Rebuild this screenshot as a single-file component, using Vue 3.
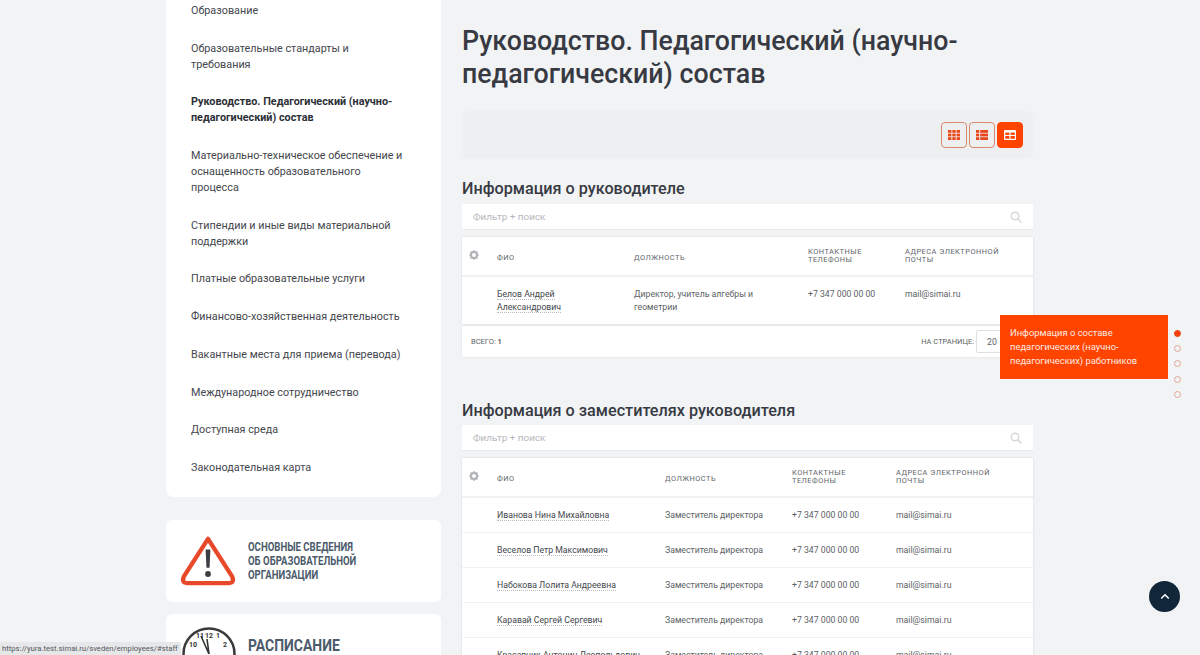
<template>
  <div class="viewport">
    <div class="page">
      <aside class="sidebar">
        <nav class="menu">
          <a
            v-for="item in menu"
            :key="item.title"
            class="menu-item"
            :class="{ active: item.active }"
          >{{ item.title }}</a>
        </nav>

        <div class="banner">
          <svg class="banner-icon" width="56" height="52" viewBox="0 0 58 54">
            <path
              d="M29 4 L54 43 Q57 50 50 50 L8 50 Q1 50 4 43 Z"
              fill="none"
              stroke="#e8492a"
              stroke-width="4.5"
              stroke-linejoin="round"
            />
            <path d="M26.5 15 H31.5 L30.6 34 H27.4 Z" fill="#3b3f44" />
            <circle cx="29" cy="40.5" r="3" fill="#3b3f44" />
          </svg>
          <div class="banner-text">ОСНОВНЫЕ СВЕДЕНИЯ<br />ОБ ОБРАЗОВАТЕЛЬНОЙ<br />ОРГАНИЗАЦИИ</div>
        </div>

        <div class="banner banner-clock">
          <svg class="clock" width="54" height="54" viewBox="0 0 54 54">
            <circle cx="27" cy="27" r="25.5" fill="#fff" stroke="#3a3a3a" stroke-width="2.5" />
            <text x="27" y="11" class="clock-num" text-anchor="middle">12</text>
            <text x="36" y="11" class="clock-num" text-anchor="middle">1</text>
            <text x="43" y="20" class="clock-num" text-anchor="middle">2</text>
            <text x="11" y="20" class="clock-num" text-anchor="middle">10</text>
            <text x="18" y="11" class="clock-num" text-anchor="middle">11</text>
            <path d="M27 27 L19 9 M27 27 L25 12" stroke="#333" stroke-width="1.6" />
          </svg>
          <div class="banner-title">РАСПИСАНИЕ</div>
        </div>
      </aside>

      <main class="content">
        <h1>Руководство. Педагогический (научно-педагогический) состав</h1>

        <div class="toolbar">
          <button class="view-btn">
            <svg width="12" height="12" viewBox="0 0 12 12" fill="#e8481c">
              <rect x="0" y="1" width="3.4" height="2.8" /><rect x="4.3" y="1" width="3.4" height="2.8" /><rect x="8.6" y="1" width="3.4" height="2.8" />
              <rect x="0" y="4.6" width="3.4" height="2.8" /><rect x="4.3" y="4.6" width="3.4" height="2.8" /><rect x="8.6" y="4.6" width="3.4" height="2.8" />
              <rect x="0" y="8.2" width="3.4" height="2.8" /><rect x="4.3" y="8.2" width="3.4" height="2.8" /><rect x="8.6" y="8.2" width="3.4" height="2.8" />
            </svg>
          </button>
          <button class="view-btn">
            <svg width="12" height="12" viewBox="0 0 12 12" fill="#e8481c">
              <rect x="0" y="1" width="3.2" height="2.8" /><rect x="4.2" y="1" width="7.8" height="2.8" />
              <rect x="0" y="4.6" width="3.2" height="2.8" /><rect x="4.2" y="4.6" width="7.8" height="2.8" />
              <rect x="0" y="8.2" width="3.2" height="2.8" /><rect x="4.2" y="8.2" width="7.8" height="2.8" />
            </svg>
          </button>
          <button class="view-btn on">
            <svg width="12" height="12" viewBox="0 0 12 12">
              <rect x="0" y="1" width="12" height="10" rx="1" fill="#fff" />
              <rect x="1.2" y="3.6" width="4.2" height="2.3" fill="#ff4400" /><rect x="6.6" y="3.6" width="4.2" height="2.3" fill="#ff4400" />
              <rect x="1.2" y="7" width="4.2" height="2.8" fill="#ff4400" /><rect x="6.6" y="7" width="4.2" height="2.8" fill="#ff4400" />
            </svg>
          </button>
        </div>

        <section class="block first">
          <h2>Информация о руководителе</h2>
          <div class="filter">
            <span>Фильтр + поиск</span>
            <svg width="12" height="12" viewBox="0 0 12 12" fill="none" stroke="#d4d6d9" stroke-width="1.4">
              <circle cx="5" cy="5" r="3.8" /><path d="M8 8 L11.4 11.4" />
            </svg>
          </div>
          <div class="grid-table cols-a">
            <div class="row head">
              <div class="gear-cell">
                <svg width="10" height="10" viewBox="0 0 10 10">
                  <circle cx="5" cy="5" r="3" fill="none" stroke="#aeb1b5" stroke-width="2" />
                  <path d="M5 0 V2 M5 8 V10 M0 5 H2 M8 5 H10 M1.5 1.5 L3 3 M7 7 L8.5 8.5 M1.5 8.5 L3 7 M7 3 L8.5 1.5" stroke="#aeb1b5" stroke-width="1.2" />
                </svg>
              </div>
              <div class="low">ФИО</div>
              <div class="low">Должность</div>
              <div class="wrap-tel">Контактные телефоны</div>
              <div class="wrap-mail">Адреса электронной почты</div>
            </div>
            <div class="row body tall">
              <div></div>
              <div><span class="name">Белов Андрей Александрович</span></div>
              <div>Директор, учитель алгебры и геометрии</div>
              <div>+7 347 000 00 00</div>
              <div>mail@simai.ru</div>
            </div>
          </div>
          <div class="table-foot">
            <div class="total">Всего: <b>1</b></div>
            <div class="per-page">
              <span>На странице:</span>
              <div class="select">20</div>
            </div>
          </div>
        </section>

        <section class="block second">
          <h2>Информация о заместителях руководителя</h2>
          <div class="filter">
            <span>Фильтр + поиск</span>
            <svg width="12" height="12" viewBox="0 0 12 12" fill="none" stroke="#d4d6d9" stroke-width="1.4">
              <circle cx="5" cy="5" r="3.8" /><path d="M8 8 L11.4 11.4" />
            </svg>
          </div>
          <div class="grid-table cols-b">
            <div class="row head">
              <div class="gear-cell">
                <svg width="10" height="10" viewBox="0 0 10 10">
                  <circle cx="5" cy="5" r="3" fill="none" stroke="#aeb1b5" stroke-width="2" />
                  <path d="M5 0 V2 M5 8 V10 M0 5 H2 M8 5 H10 M1.5 1.5 L3 3 M7 7 L8.5 8.5 M1.5 8.5 L3 7 M7 3 L8.5 1.5" stroke="#aeb1b5" stroke-width="1.2" />
                </svg>
              </div>
              <div class="low">ФИО</div>
              <div class="low">Должность</div>
              <div class="wrap-tel">Контактные телефоны</div>
              <div class="wrap-mail">Адреса электронной почты</div>
            </div>
            <div v-for="p in deputies" :key="p" class="row body">
              <div></div>
              <div><span class="name">{{ p }}</span></div>
              <div>Заместитель директора</div>
              <div>+7 347 000 00 00</div>
              <div>mail@simai.ru</div>
            </div>
          </div>
        </section>
      </main>
    </div>

    <div class="hint">Информация о составе педагогических (научно-педагогических) работников</div>
    <div class="dots">
      <span v-for="n in 5" :key="n" class="dot" :class="{ on: n === 1 }"></span>
    </div>
    <button class="to-top">
      <svg width="10" height="7" viewBox="0 0 12 8" fill="none" stroke="#fff" stroke-width="1.8">
        <path d="M1.5 6.5 L6 2 L10.5 6.5" />
      </svg>
    </button>
    <div class="status">https://yura.test.simai.ru/sveden/employees/#staff</div>
  </div>
</template>

<script setup>
const menu = [
  { title: "Образование" },
  { title: "Образовательные стандарты и требования" },
  { title: "Руководство. Педагогический (научно-педагогический) состав", active: true },
  { title: "Материально-техническое обеспечение и оснащенность образовательного процесса" },
  { title: "Стипендии и иные виды материальной поддержки" },
  { title: "Платные образовательные услуги" },
  { title: "Финансово-хозяйственная деятельность" },
  { title: "Вакантные места для приема (перевода)" },
  { title: "Международное сотрудничество" },
  { title: "Доступная среда" },
  { title: "Законодательная карта" },
];

const deputies = [
  "Иванова Нина Михайловна",
  "Веселов Петр Максимович",
  "Набокова Лолита Андреевна",
  "Каравай Сергей Сергевич",
  "Красавчик Антонин Леопольдович",
];
</script>

<style>
html,
body {
  margin: 0;
  overflow: hidden;
  background: #f2f3f5;
}
</style>

<style scoped>
.viewport {
  position: relative;
  width: 1200px;
  height: 655px;
  overflow: hidden;
  background: #f2f3f5;
  font-family: Roboto, "Open Sans", sans-serif;
  color: #3e4148;
}

.page {
  display: flex;
  gap: 21px;
  padding-left: 166px;
}

/* sidebar, scrolled past its top */
.sidebar {
  width: 275px;
  flex-shrink: 0;
}

.menu {
  display: flex;
  flex-direction: column;
  gap: 21.7px;
  height: 497px;
  box-sizing: border-box;
  padding: 3px 38px 0 25px;
  background: #fff;
  border-radius: 0 0 8px 8px;
}

.menu-item {
  font-size: 10.8px;
  line-height: 16px;
  color: #44474d;
}

.menu-item.active {
  font-weight: 700;
  color: #2d3037;
}

.banner {
  display: flex;
  align-items: center;
  height: 82px;
  margin-top: 23px;
  padding-left: 14px;
  box-sizing: border-box;
  background: #fff;
  border-radius: 6px;
}

.banner-icon {
  flex-shrink: 0;
}

.banner-text {
  margin-left: 12px;
  font-weight: 700;
  font-size: 12px;
  line-height: 14px;
  color: #4c5b6b;
  white-space: nowrap;
  transform: scaleX(0.8);
  transform-origin: left center;
}

.banner-clock {
  margin-top: 12px;
  align-items: flex-start;
  padding-top: 13px;
  padding-left: 16px;
}

.clock {
  flex-shrink: 0;
}

.clock-num {
  font-size: 7px;
  font-weight: 700;
  font-family: Roboto, sans-serif;
  fill: #333;
}

.banner-title {
  margin: 8px 0 0 12px;
  font-weight: 700;
  font-size: 17px;
  line-height: 20px;
  color: #4c5b6b;
  transform: scaleX(0.82);
  transform-origin: left center;
}

/* content */
.content {
  width: 571px;
  flex-shrink: 0;
  padding-top: 25px;
}

h1 {
  margin: 0;
  font-weight: 500;
  font-size: 26.75px;
  line-height: 32.5px;
  color: #373a42;
}

.toolbar {
  display: flex;
  justify-content: flex-end;
  align-items: center;
  gap: 2px;
  height: 47px;
  margin-top: 21px;
  padding-right: 10px;
  background: #eeeff1;
  border-radius: 6px;
}

.view-btn {
  display: flex;
  align-items: center;
  justify-content: center;
  width: 26px;
  height: 26px;
  padding: 0;
  background: transparent;
  border: 1px solid #d98a6e;
  border-radius: 4px;
}

.view-btn.on {
  background: #ff4400;
  border-color: #ff4400;
}

h2 {
  margin: 0;
  font-weight: 500;
  font-size: 16.2px;
  line-height: 20px;
  color: #373a42;
}

.first {
  margin-top: 21px;
}

.second {
  margin-top: 44px;
}

.second .filter {
  margin-top: 4px;
}

.filter {
  display: flex;
  align-items: center;
  justify-content: space-between;
  height: 26px;
  margin-top: 5px;
  padding: 0 11px;
  background: #fff;
  border-bottom: 1px solid #e9eaec;
  box-sizing: border-box;
  font-size: 9.9px;
  color: #b5b8bc;
}

.grid-table {
  margin-top: 7px;
  background: #fff;
  box-shadow: 0 0 2px rgba(0, 0, 0, 0.12);
}

.row {
  display: grid;
  align-items: center;
  box-sizing: border-box;
}

.cols-a .row {
  grid-template-columns: 35px 137px 174px 97px 1fr;
}

.cols-b .row {
  grid-template-columns: 35px 168px 127px 104px 1fr;
}

.row.head {
  height: 40px;
  border-bottom: 2px solid #f0f1f2;
  font-size: 7.4px;
  line-height: 8px;
  letter-spacing: 0.5px;
  text-transform: uppercase;
  color: #62656b;
}

.row.head .low {
  padding-top: 4px;
}

.wrap-tel {
  max-width: 70px;
}

.wrap-mail {
  max-width: 100px;
}

.gear-cell {
  display: flex;
  padding-left: 7px;
  margin-top: -3px;
}

.row.body {
  height: 35px;
  border-bottom: 1px solid #f1f2f3;
  font-size: 8.7px;
  line-height: 13px;
  color: #5c5f65;
}

.row.tall {
  height: 47px;
  align-items: start;
  padding-top: 11px;
  border-bottom: 0;
}

.row.tall > div:nth-child(2),
.row.tall > div:nth-child(3) {
  padding-right: 18px;
}

.name {
  color: #44474d;
  border-bottom: 1px dotted #b9bcc0;
}

.table-foot {
  display: flex;
  align-items: center;
  justify-content: space-between;
  height: 31px;
  margin-top: 2px;
  padding: 0 9px;
  background: #fff;
  box-shadow: 0 0 2px rgba(0, 0, 0, 0.1);
  font-size: 7.5px;
  text-transform: uppercase;
  color: #5c5f65;
}

.per-page {
  display: flex;
  align-items: center;
  gap: 2px;
}

.select {
  width: 48px;
  height: 23px;
  line-height: 22px;
  padding-left: 10px;
  box-sizing: border-box;
  border: 1px solid #dfe0e2;
  border-radius: 2px;
  font-size: 8.7px;
}

/* things that stay over the page */
.hint {
  position: absolute;
  left: 1000px;
  top: 315px;
  width: 168px;
  height: 64px;
  box-sizing: border-box;
  padding: 11px 10px 0;
  background: #ff4400;
  color: #ffe9e0;
  font-size: 9.4px;
  line-height: 14px;
}

.dots {
  position: absolute;
  left: 1174px;
  top: 329.5px;
  display: flex;
  flex-direction: column;
  gap: 8.4px;
}

.dot {
  width: 7px;
  height: 7px;
  box-sizing: border-box;
  border: 1px solid #e4a491;
  border-radius: 50%;
}

.dot.on {
  background: #f2400f;
  border-color: #f2400f;
}

.to-top {
  position: absolute;
  left: 1149px;
  top: 581px;
  width: 31px;
  height: 31px;
  display: flex;
  align-items: center;
  justify-content: center;
  padding: 0;
  border: 0;
  border-radius: 50%;
  background: #12263a;
}

.status {
  position: absolute;
  left: 0;
  bottom: 0;
  height: 13px;
  padding: 0 2px;
  width: 181px;
  box-sizing: border-box;
  background: #e6e7e8;
  border-top-right-radius: 2px;
  font-size: 7.7px;
  line-height: 13px;
  color: #55585c;
  white-space: nowrap;
  overflow: hidden;
}
</style>
